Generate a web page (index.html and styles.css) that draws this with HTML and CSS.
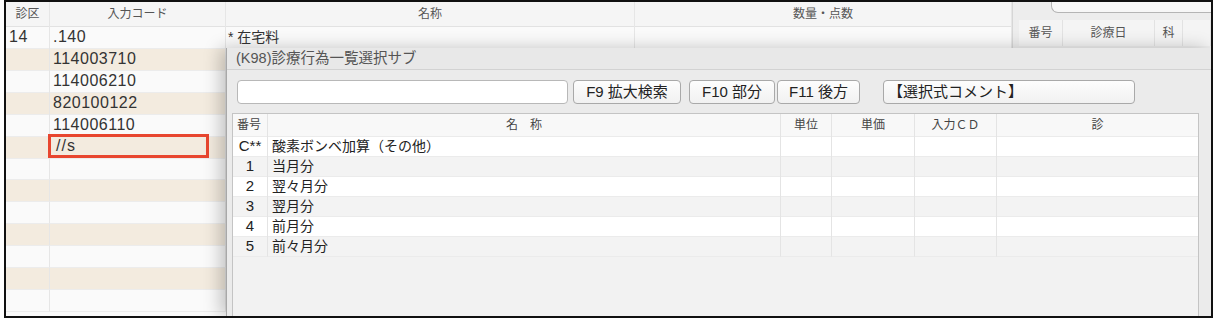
FILE: index.html
```html
<!DOCTYPE html>
<html lang="ja">
<head>
    <meta charset="UTF-8">
    <title>診療行為入力</title>
    <link rel="stylesheet" href="styles.css">
</head>
<body>
    <div class="frame">
        <div class="main">
            <div class="sheet">
                <div class="row head">
                    <div class="cell">診区</div>
                    <div class="cell">入力コード</div>
                    <div class="cell">名称</div>
                    <div class="cell">数量・点数</div>
                </div>
                <div class="row">
                    <div class="cell">14</div>
                    <div class="cell">.140</div>
                    <div class="cell name">* 在宅料</div>
                    <div class="cell"></div>
                </div>
                <div class="row"><div class="cell"></div><div class="cell">114003710</div><div class="cell"></div><div class="cell"></div></div>
                <div class="row"><div class="cell"></div><div class="cell">114006210</div><div class="cell"></div><div class="cell"></div></div>
                <div class="row"><div class="cell"></div><div class="cell">820100122</div><div class="cell"></div><div class="cell"></div></div>
                <div class="row"><div class="cell"></div><div class="cell">114006110</div><div class="cell"></div><div class="cell"></div></div>
                <div class="row">
                    <div class="cell"></div>
                    <div class="cell"><div class="edit">//s</div></div>
                    <div class="cell"></div>
                    <div class="cell"></div>
                </div>
                <div class="row"><div class="cell"></div><div class="cell"></div><div class="cell"></div><div class="cell"></div></div>
                <div class="row"><div class="cell"></div><div class="cell"></div><div class="cell"></div><div class="cell"></div></div>
                <div class="row"><div class="cell"></div><div class="cell"></div><div class="cell"></div><div class="cell"></div></div>
                <div class="row"><div class="cell"></div><div class="cell"></div><div class="cell"></div><div class="cell"></div></div>
                <div class="row"><div class="cell"></div><div class="cell"></div><div class="cell"></div><div class="cell"></div></div>
                <div class="row"><div class="cell"></div><div class="cell"></div><div class="cell"></div><div class="cell"></div></div>
                <div class="row"><div class="cell"></div><div class="cell"></div><div class="cell"></div><div class="cell"></div></div>
            </div>

            <div class="side">
                <div class="side-tab"></div>
                <div class="side-head">
                    <div class="cell">番号</div>
                    <div class="cell">診療日</div>
                    <div class="cell">科</div>
                    <div class="cell"></div>
                </div>
            </div>
        </div>

        <!-- K98 サブ画面 -->
        <div class="dialog">
            <div class="dialog-title">(K98)診療行為一覧選択サブ</div>
            <div class="toolbar">
                <div class="search"></div>
                <div class="btn f9">F9 拡大検索</div>
                <div class="btn f10">F10 部分</div>
                <div class="btn f11">F11 後方</div>
                <div class="btn comment">【選択式コメント】</div>
            </div>
            <div class="list">
                <div class="list-row list-head">
                    <div class="cell">番号</div>
                    <div class="cell">名　称</div>
                    <div class="cell">単位</div>
                    <div class="cell">単価</div>
                    <div class="cell">入力ＣＤ</div>
                    <div class="cell">診</div>
                </div>
                <div class="list-row">
                    <div class="cell no">C**</div>
                    <div class="cell">酸素ボンベ加算（その他）</div>
                    <div class="cell"></div><div class="cell"></div><div class="cell"></div><div class="cell"></div>
                </div>
                <div class="list-row">
                    <div class="cell no">1</div>
                    <div class="cell">当月分</div>
                    <div class="cell"></div><div class="cell"></div><div class="cell"></div><div class="cell"></div>
                </div>
                <div class="list-row">
                    <div class="cell no">2</div>
                    <div class="cell">翌々月分</div>
                    <div class="cell"></div><div class="cell"></div><div class="cell"></div><div class="cell"></div>
                </div>
                <div class="list-row">
                    <div class="cell no">3</div>
                    <div class="cell">翌月分</div>
                    <div class="cell"></div><div class="cell"></div><div class="cell"></div><div class="cell"></div>
                </div>
                <div class="list-row">
                    <div class="cell no">4</div>
                    <div class="cell">前月分</div>
                    <div class="cell"></div><div class="cell"></div><div class="cell"></div><div class="cell"></div>
                </div>
                <div class="list-row">
                    <div class="cell no">5</div>
                    <div class="cell">前々月分</div>
                    <div class="cell"></div><div class="cell"></div><div class="cell"></div><div class="cell"></div>
                </div>
            </div>
        </div>
    </div>
</body>
</html>
```

FILE: styles.css
```css
body {
    margin: 0;
    background: #fff;
    font-family: "Liberation Sans", "Noto Sans CJK JP", sans-serif;
    color: #333;
}

.frame {
    position: relative;
    box-sizing: border-box;
    width: 1209px;
    height: 318px;
    margin-left: 4px;
    border: 2px solid #111;
    overflow: hidden;
    background: #fafafa;
}

.main {
    display: flex;
    height: 100%;
}

/* 左の入力表 */
.sheet {
    width: 1006px;
}

.row {
    display: grid;
    grid-template-columns: 44px 176px 409px 377px;
    height: 22px;
    font-size: 16px;
    line-height: 22px;
    letter-spacing: 0.5px;
}

.row:nth-child(odd) {
    background: #f3ebdf;
}

.row:nth-child(even) {
    background: #fafafa;
}

.row .cell {
    border-right: 1px solid #e6e6e6;
    border-bottom: 1px solid #ececec;
    padding-left: 3px;
    white-space: nowrap;
}

.row .cell:nth-child(3) {
    padding-left: 2px;
}

.row .cell.name {
    font-size: 14px;
    letter-spacing: 0;
}

.row.head {
    height: 24px;
    background: #f5f5f5;
    font-size: 12px;
    line-height: 24px;
    letter-spacing: 0;
    color: #555;
}

.row.head .cell {
    text-align: center;
    padding-left: 0;
    border-bottom: 1px solid #e2e2e2;
}

.edit {
    box-sizing: border-box;
    width: 161px;
    height: 24px;
    margin: -2px 0 0 -5px;
    padding-left: 5px;
    border: 3px solid #e8462f;
    line-height: 18px;
    letter-spacing: 1px;
}

/* 右側の履歴 */
.side {
    flex: 1;
    background: #ededed;
    border-left: 1px solid #d6d6d6;
}

.side-tab {
    height: 10px;
    margin-left: 38px;
    border: 1px solid #b5b5b5;
    border-top: none;
    border-right: none;
    border-bottom-left-radius: 7px;
    background: #f7f7f7;
}

.side-head {
    display: grid;
    grid-template-columns: 44px 92px 28px 1fr;
    height: 26px;
    margin: 7px 0 0 6px;
    background: #f4f4f4;
    font-size: 12px;
    line-height: 26px;
    color: #555;
}

.side-head .cell {
    text-align: center;
    border-right: 1px solid #e2e2e2;
}

/* サブ画面 */
.dialog {
    position: absolute;
    left: 220px;
    top: 46px;
    right: 0;
    bottom: 0;
    display: flex;
    flex-direction: column;
    background: #ebebeb;
    border-left: 1px solid #a8a8a8;
    box-shadow: -6px 0 16px rgba(0, 0, 0, 0.22);
}

.dialog-title {
    height: 21px;
    padding-left: 9px;
    background: #e8e8e8;
    border-bottom: 1px solid #d2d2d2;
    font-size: 14.5px;
    line-height: 21px;
    color: #555;
}

.toolbar {
    display: flex;
    height: 24px;
    margin: 10px 0 0 10px;
}

.search {
    box-sizing: border-box;
    width: 331px;
    background: #fff;
    border: 1px solid #b8b8b8;
    border-radius: 4px;
}

.btn {
    box-sizing: border-box;
    height: 24px;
    border: 1px solid #a9a9a9;
    border-radius: 4px;
    background: linear-gradient(#fdfdfd, #f1f1f1);
    font-size: 15px;
    line-height: 22px;
    text-align: center;
    color: #222;
}

.f9 {
    width: 108px;
    margin-left: 5px;
}

.f10 {
    width: 86px;
    margin-left: 8px;
}

.f11 {
    width: 83px;
    margin-left: 2px;
}

.comment {
    width: 252px;
    margin-left: 23px;
    padding-left: 4px;
    text-align: left;
}

.list {
    flex: 1;
    margin: 9px 12px 0 5px;
    background: #f2f2f2;
    border: 1px solid #c4c4c4;
    border-bottom: none;
}

.list-row {
    display: grid;
    grid-template-columns: 35px 513px 51px 83px 82px 1fr;
    height: 20px;
    font-size: 14px;
    line-height: 20px;
    color: #222;
}

.list-row:nth-child(even) {
    background: #fff;
}

.list-row:nth-child(odd) {
    background: #f3f3f3;
}

.list-row .cell {
    border-right: 1px solid #e4e4e4;
    border-bottom: 1px solid #ebebeb;
    padding-left: 4px;
    white-space: nowrap;
}

.list-row .cell.no {
    padding-left: 0;
    text-align: center;
    font-size: 15px;
}

.list-row .cell:last-child {
    border-right: none;
}

.list-row.list-head {
    height: 22px;
    background: #f8f8f8;
    font-size: 12px;
    line-height: 22px;
    color: #444;
}

.list-head .cell {
    text-align: center;
    padding-left: 0;
}

.list-head .cell:first-child {
    text-align: left;
    padding-left: 4px;
}
```
